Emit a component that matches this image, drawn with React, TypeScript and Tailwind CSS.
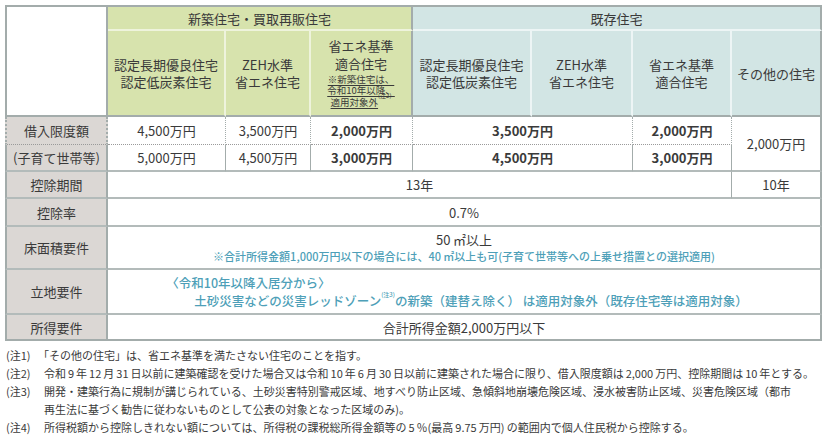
import React from "react";

const G = "border-[#a3acab]";

function sp(s: string) {
  return s.split(/([0-9][0-9,.]*)/).map((p, i) =>
    i % 2 ? (
      <span key={i} className="mx-[2px]">
        {p}
      </span>
    ) : (
      <React.Fragment key={i}>{p}</React.Fragment>
    )
  );
}

export default function App() {
  const rh = `bg-[#dbd7d4] border-l-2 border-r-2 ${G} text-[13px] text-center font-normal p-0`;
  const td = `border-r ${G} text-[13px] text-center p-0`;
  const last = `border-r-2 ${G} text-[13px] text-center p-0`;
  const rowB = `border-b-2 border-b-[#b3bbba]`;
  const dot = `border-b border-dotted border-b-[#9a9a9a]`;
  const teal = "text-[#4e9fb8]";
  return (
    <div className="w-[832px] h-[441px] bg-white overflow-hidden text-[#3a3a3a] font-['Noto_Sans_CJK_JP','Noto_Sans',sans-serif]">
      <div className="pt-[5px] pl-[5px]">
        <table className="table-fixed border-separate border-spacing-0 w-[817px] leading-[17px]">
          <colgroup>
            <col className="w-[103px]" />
            <col className="w-[118px]" />
            <col className="w-[85px]" />
            <col className="w-[102px]" />
            <col className="w-[119px]" />
            <col className="w-[101px]" />
            <col className="w-[99px]" />
            <col className="w-[90px]" />
          </colgroup>
          <thead>
            <tr>
              <td rowSpan={2} className={`bg-white border-2 ${G} p-0`} />
              <th colSpan={3} className={`h-[26px] bg-[#d7e3ad] border-t-2 ${G} border-b-2 border-b-[#eef3dc] border-r-2 text-[13px] font-normal p-0`}>
                新築住宅・買取再販住宅
              </th>
              <th colSpan={4} className={`h-[26px] bg-[#d2e5e4] border-t-2 ${G} border-b-2 border-b-[#edf5f5] border-r-2 text-[13px] font-normal p-0`}>
                既存住宅
              </th>
            </tr>
            <tr>
              <th className={`h-[86px] bg-[#d7e3ad] border-r-2 border-r-[#eef3dc] border-b-2 border-b-[#a3acab] text-[13px] font-normal p-0`}>
                認定長期優良住宅<br />認定低炭素住宅
              </th>
              <th className={`bg-[#d7e3ad] border-r-2 border-r-[#eef3dc] border-b-2 border-b-[#a3acab] text-[13px] font-normal p-0`}>
                ZEH水準<br />省エネ住宅
              </th>
              <th className={`bg-[#d7e3ad] border-r-2 border-r-[#a3acab] border-b-2 border-b-[#a3acab] text-[13px] font-normal p-0`}>
                <div className="leading-[18px]">省エネ基準<br />適合住宅</div>
                <div className="text-[9.5px] leading-[11.5px] mt-[1px] mb-[1px]">
                  <span className="underline underline-offset-[2px]">※新築住宅は、</span><br />
                  <span className="underline underline-offset-[2px]">令和10年以降、</span><br />
                  <span className="underline underline-offset-[2px]">適用対象外</span>
                  <sup className="text-[6px] align-[5px]">(注2)</sup>
                </div>
              </th>
              <th className={`bg-[#d2e5e4] border-r-2 border-r-[#edf5f5] border-b-2 border-b-[#a3acab] text-[13px] font-normal p-0`}>
                認定長期優良住宅<br />認定低炭素住宅
              </th>
              <th className={`bg-[#d2e5e4] border-r-2 border-r-[#edf5f5] border-b-2 border-b-[#a3acab] text-[13px] font-normal p-0`}>
                ZEH水準<br />省エネ住宅
              </th>
              <th className={`bg-[#d2e5e4] border-r-2 border-r-[#edf5f5] border-b-2 border-b-[#a3acab] text-[13px] font-normal p-0`}>
                省エネ基準<br />適合住宅
              </th>
              <th className={`bg-[#d2e5e4] border-r-2 border-r-[#a3acab] border-b-2 border-b-[#a3acab] text-[13px] font-normal p-0`}>
                その他の住宅
              </th>
            </tr>
          </thead>
          <tbody>
            <tr>
              <th className={`${rh} h-[28px] ${dot}`}>借入限度額</th>
              <td className={`${td} ${dot}`}>4,500万円</td>
              <td className={`${td} ${dot}`}>3,500万円</td>
              <td className={`${td} ${dot} font-bold`}>2,000万円</td>
              <td colSpan={2} className={`${td} ${dot} font-bold`}>3,500万円</td>
              <td className={`${td} ${dot} font-bold`}>2,000万円</td>
              <td rowSpan={2} className={`${last} ${rowB}`}>2,000万円</td>
            </tr>
            <tr>
              <th className={`${rh} h-[27px] ${rowB}`}>(子育て世帯等)</th>
              <td className={`${td} ${rowB}`}>5,000万円</td>
              <td className={`${td} ${rowB}`}>4,500万円</td>
              <td className={`${td} ${rowB} font-bold`}>3,000万円</td>
              <td colSpan={2} className={`${td} ${rowB} font-bold`}>4,500万円</td>
              <td className={`${td} ${rowB} font-bold`}>3,000万円</td>
            </tr>
            <tr>
              <th className={`${rh} h-[27px] ${rowB}`}>控除期間</th>
              <td colSpan={6} className={`${td} ${rowB}`}>13年</td>
              <td className={`${last} ${rowB}`}>10年</td>
            </tr>
            <tr>
              <th className={`${rh} h-[28px] ${rowB}`}>控除率</th>
              <td colSpan={7} className={`${last} ${rowB}`}>0.7%</td>
            </tr>
            <tr>
              <th className={`${rh} h-[43px] ${rowB}`}>床面積要件</th>
              <td colSpan={7} className={`${last} ${rowB}`}>
                <div className="leading-[17px]">50&thinsp;㎡以上</div>
                <div className={`text-[11px] leading-[16px] font-medium ${teal}`}>
                  ※合計所得金額1,000万円以下の場合には、40&thinsp;㎡以上も可(子育て世帯等への上乗せ措置との選択適用)
                </div>
              </td>
            </tr>
            <tr>
              <th className={`${rh} h-[45px] ${rowB}`}>立地要件</th>
              <td colSpan={7} className={`${last} ${rowB}`}>
                <div className={`inline-block pl-[14px] text-left text-[12.5px] leading-[18px] font-medium ${teal}`}>
                  <div className="-ml-[28px]">〈令和10年以降入居分から〉</div>
                  <div>
                    土砂災害などの災害レッドゾーン<sup className="text-[6px] align-[6px]">(注3)</sup>の新築（建替え除く） は適用対象外（既存住宅等は適用対象）
                  </div>
                </div>
              </td>
            </tr>
            <tr>
              <th className={`${rh} h-[26px] border-b-2 ${G}`}>所得要件</th>
              <td colSpan={7} className={`${last} border-b-2`}>合計所得金額2,000万円以下</td>
            </tr>
          </tbody>
        </table>
      </div>
      <div className="mt-[5px] pl-[6px] pr-[2px] text-[11px] leading-[18px] text-[#3a3a3a]">
        <div className="flex"><span className="w-[32px] shrink-0">(注1)</span><span>「その他の住宅」は、省エネ基準を満たさない住宅のことを指す。</span></div>
        <div className="flex"><span className="w-[38px] shrink-0">(注2)</span><span className="whitespace-nowrap">{sp("令和9年12月31日以前に建築確認を受けた場合又は令和10年6月30日以前に建築された場合に限り、借入限度額は2,000万円、控除期間は10年とする。")}</span></div>
        <div className="flex"><span className="w-[38px] shrink-0">(注3)</span><span className="whitespace-nowrap">開発・建築行為に規制が講じられている、土砂災害特別警戒区域、地すべり防止区域、急傾斜地崩壊危険区域、浸水被害防止区域、災害危険区域（都市<br />再生法に基づく勧告に従わないものとして公表の対象となった区域のみ)。</span></div>
        <div className="flex"><span className="w-[38px] shrink-0">(注4)</span><span>{sp("所得税額から控除しきれない額については、所得税の課税総所得金額等の5％(最高9.75万円) の範囲内で個人住民税から控除する。")}</span></div>
      </div>
    </div>
  );
}
